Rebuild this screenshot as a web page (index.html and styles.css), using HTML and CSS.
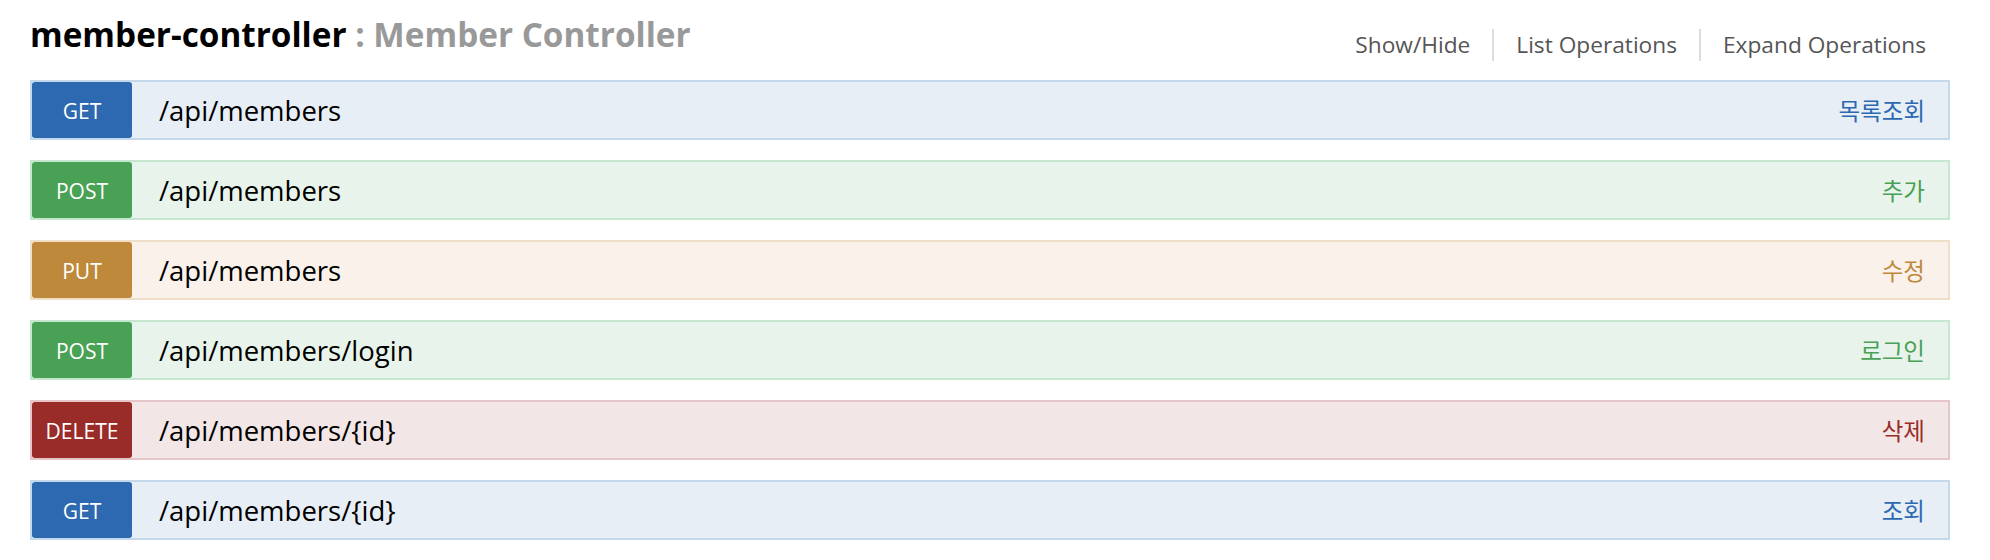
FILE: index.html
```html
<!DOCTYPE html>
<html lang="ko">
<head>
<meta charset="utf-8">
<title>member-controller</title>
<link rel="stylesheet" href="styles.css">
</head>
<body>
<div class="resource">
  <div class="heading">
    <h2 class="title"><span class="name">member-controller</span><span class="desc"> : Member Controller</span></h2>
    <ul class="options">
      <li>Show/Hide</li>
      <li>List Operations</li>
      <li>Expand Operations</li>
    </ul>
  </div>
  <ul class="endpoints">
    <li class="op get"><span class="method">GET</span><span class="path">/api/members</span><span class="summary">목록조회</span></li>
    <li class="op post"><span class="method">POST</span><span class="path">/api/members</span><span class="summary">추가</span></li>
    <li class="op put"><span class="method">PUT</span><span class="path">/api/members</span><span class="summary">수정</span></li>
    <li class="op post"><span class="method">POST</span><span class="path">/api/members/login</span><span class="summary">로그인</span></li>
    <li class="op delete"><span class="method">DELETE</span><span class="path">/api/members/{id}</span><span class="summary">삭제</span></li>
    <li class="op get"><span class="method">GET</span><span class="path">/api/members/{id}</span><span class="summary">조회</span></li>
  </ul>
</div>
</body>
</html>
```
FILE: styles.css
```css
html, body {
  margin: 0;
  padding: 0;
  background: #ffffff;
}
body {
  font-family: "Open Sans", "Noto Sans", "Noto Sans CJK KR", sans-serif;
}
.resource {
  padding: 0 40px 0 30px;
}
.heading {
  display: flex;
  justify-content: space-between;
  align-items: flex-start;
  height: 80px;
}
.title {
  margin: 0;
  padding-top: 14px;
  font-size: 33.3px;
  font-weight: 700;
  line-height: 40px;
  letter-spacing: 0;
}
.title .name { color: #000000; }
.title .desc { color: #999999; }
.options {
  list-style: none;
  margin: 0;
  padding: 29px 24px 0 0;
  display: flex;
}
.options li {
  font-size: 22.7px;
  line-height: 32px;
  color: #555555;
  padding: 0 22px;
  border-left: 2px solid #dddddd;
}
.options li:first-child {
  border-left: none;
}
.options li:last-child {
  padding-right: 0;
}
.endpoints {
  list-style: none;
  margin: 0;
  padding: 0;
}
.op {
  display: flex;
  align-items: center;
  height: 56px;
  border: 2px solid;
  margin-bottom: 20px;
}
.method {
  width: 100px;
  height: 56px;
  border-radius: 3px;
  color: #ffffff;
  font-size: 21px;
  padding-top: 2px;
  box-sizing: border-box;
  display: flex;
  align-items: center;
  justify-content: center;
  flex: none;
}
.path {
  margin-left: 27px;
  font-size: 27.5px;
  color: #000000;
  flex: 1;
}
.summary {
  font-family: "Noto Sans CJK KR", "Noto Sans", sans-serif;
  font-size: 23.5px;
  padding-right: 23px;
}
.get { background: #e7eef6; border-color: #c5d9ec; }
.get .method { background: #2d69b0; }
.get .summary { color: #2d69b0; }
.post { background: #e8f4eb; border-color: #c5e7d0; }
.post .method { background: #48a155; }
.post .summary { color: #48a155; }
.put { background: #f9f1ea; border-color: #efdfc9; }
.put .method { background: #bf893c; }
.put .summary { color: #bf893c; }
.delete { background: #f3e6e6; border-color: #e6c6c8; }
.delete .method { background: #992b28; }
.delete .summary { color: #992b28; }
```
